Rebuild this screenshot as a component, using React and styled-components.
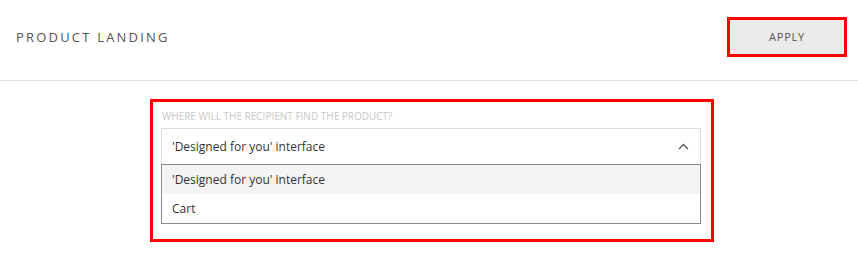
import React, { useState } from "react";
import styled, { createGlobalStyle } from "styled-components";

const GlobalStyle = createGlobalStyle`
  body {
    margin: 0;
    background: #fff;
    font-family: "Open Sans", "Liberation Sans", sans-serif;
  }
`;

const Header = styled.header`
  display: flex;
  justify-content: space-between;
  align-items: center;
  height: 81px;
  padding: 0 11px 7px 16px;
  border-bottom: 1px solid #e2e2e2;
  box-sizing: border-box;
`;

const Title = styled.h1`
  margin: 0;
  font-size: 13px;
  font-weight: 400;
  letter-spacing: 2.2px;
  color: #555;
`;

const ApplyButton = styled.button`
  width: 120px;
  height: 40px;
  border: 3px solid #f00;
  background: #ebebeb;
  font-family: inherit;
  font-size: 11px;
  letter-spacing: 0.8px;
  color: #555;
  cursor: pointer;
`;

const Main = styled.main`
  display: flex;
  padding: 18px 0 0 150px;
`;

const Panel = styled.section`
  width: 564px;
  box-sizing: border-box;
  border: 3px solid #f00;
  padding: 8px 10px 15px 8px;
`;

const Label = styled.div`
  font-size: 10px;
  color: #c8c8c8;
  line-height: 13px;
  margin-bottom: 5px;
  padding-left: 1px;
`;

const SelectBox = styled.div`
  display: flex;
  justify-content: space-between;
  align-items: center;
  height: 36px;
  box-sizing: border-box;
  padding: 0 11px 0 10px;
  border: 1px solid #dcdcdc;
  border-bottom: none;
  font-size: 12px;
  color: #333;
  cursor: pointer;
`;

const Options = styled.ul`
  list-style: none;
  margin: 0;
  padding: 0;
  border: 1px solid #8a8a8a;
`;

const Option = styled.li`
  height: 29px;
  display: flex;
  align-items: center;
  padding-left: 10px;
  font-size: 12px;
  color: #333;
  background: ${(p) => (p.$active ? "#f4f4f4" : "#fff")};
  cursor: pointer;
`;

const options = ["'Designed for you' interface", "Cart"];

const App = () => {
  const [value, setValue] = useState(options[0]);
  const [open, setOpen] = useState(true);

  return (
    <>
      <GlobalStyle />
      <Header>
        <Title>PRODUCT LANDING</Title>
        <ApplyButton>APPLY</ApplyButton>
      </Header>
      <Main>
        <Panel>
          <Label>WHERE WILL THE RECIPIENT FIND THE PRODUCT?</Label>
          <SelectBox onClick={() => setOpen(!open)}>
            <span>{value}</span>
            <svg width="11" height="7" viewBox="0 0 11 7">
              <path d="M1 6 L5.5 1.5 L10 6" fill="none" stroke="#555" strokeWidth="1.3" />
            </svg>
          </SelectBox>
          {open && (
            <Options>
              {options.map((o) => (
                <Option key={o} $active={o === value} onClick={() => setValue(o)}>
                  {o}
                </Option>
              ))}
            </Options>
          )}
        </Panel>
      </Main>
    </>
  );
};

export default App;
